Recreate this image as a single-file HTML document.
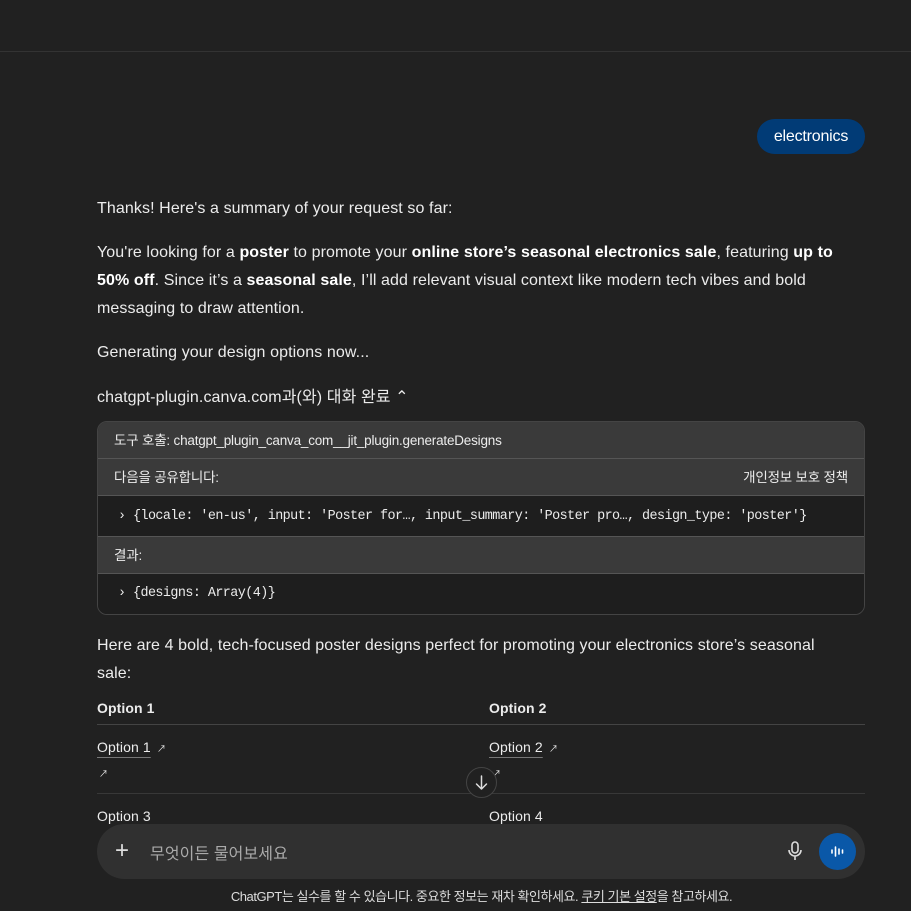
<!DOCTYPE html>
<html><head><meta charset="utf-8"><style>
*{margin:0;padding:0;box-sizing:border-box}
body{width:911px;height:911px;background:#212121;color:#ececec;font-family:"Liberation Sans","Noto Sans CJK KR",sans-serif;font-size:16px;letter-spacing:0.1px;position:relative;overflow:hidden}
.a{position:absolute}
.t{left:97px;width:800px;line-height:28px;white-space:nowrap}
b{font-weight:bold;color:#fff}
.box{left:97px;top:421px;width:768px;height:194px;border:1px solid #444;border-radius:10px;overflow:hidden;font-size:13.5px;letter-spacing:-0.2px}
.row{height:37px;line-height:37px;padding-left:16px;padding-right:16px;border-bottom:1px solid #555}
.mono{font-family:"Liberation Mono",monospace;font-size:13.4px;letter-spacing:-0.55px;background:#1e1e1e;padding-left:20px}
.u{text-decoration:underline;text-decoration-color:#777;text-underline-offset:5px}
</style></head><body>
<div class="a" style="left:0;top:0;width:911px;height:52px;border-bottom:1px solid #333"></div>
<div class="a" style="left:757px;top:119px;width:108px;height:35px;border-radius:18px;background:#013b76;color:#fff;line-height:35px;text-align:center;font-size:16px;letter-spacing:-0.2px">electronics</div>
<div class="a t" style="top:195px">Thanks! Here's a summary of your request so far:</div>
<div class="a t" style="top:239px">You're looking for a <b>poster</b> to promote your <b>online store’s seasonal electronics sale</b>, featuring <b>up to</b><br><b>50% off</b>. Since it’s a <b>seasonal sale</b>, I’ll add relevant visual context like modern tech vibes and bold<br>messaging to draw attention.</div>
<div class="a t" style="top:339px">Generating your design options now...</div>
<div class="a t" style="top:384px">chatgpt-plugin.canva.com과(와) 대화 완료 ⌃</div>
<div class="a box">
<div class="row" style="background:#3a3a3a">도구 호출: chatgpt_plugin_canva_com__jit_plugin.generateDesigns</div>
<div class="row" style="background:#3a3a3a;display:flex;justify-content:space-between"><span>다음을 공유합니다:</span><span>개인정보 보호 정책</span></div>
<div class="row mono" style="height:41px;line-height:41px">› {locale: 'en-us', input: 'Poster for…, input_summary: 'Poster pro…, design_type: 'poster'}</div>
<div class="row" style="background:#3a3a3a">결과:</div>
<div class="row mono" style="border:0;height:41px;line-height:40px">› {designs: Array(4)}</div>
</div>
<div class="a t" style="top:632px">Here are 4 bold, tech-focused poster designs perfect for promoting your electronics store’s seasonal<br>sale:</div>
<div class="a" style="left:97px;top:700px;font-size:14px;font-weight:bold">Option 1</div>
<div class="a" style="left:489px;top:700px;font-size:14px;font-weight:bold">Option 2</div>
<div class="a" style="left:97px;top:724px;width:768px;height:1px;background:#444"></div>
<div class="a u" style="left:97px;top:739px;font-size:14px">Option 1</div><span class="a" style="left:157px;top:742px;font-size:9px">↗</span>
<div class="a u" style="left:489px;top:739px;font-size:14px">Option 2</div><span class="a" style="left:549px;top:742px;font-size:9px">↗</span>
<span class="a" style="left:99px;top:767px;font-size:9px">↗</span>
<span class="a" style="left:492px;top:767px;font-size:9px">↗</span>
<div class="a" style="left:97px;top:793px;width:768px;height:1px;background:#383838"></div>
<div class="a" style="left:466px;top:767px;width:31px;height:31px;border-radius:50%;border:1px solid #444;background:#212121"></div>
<svg class="a" style="left:473px;top:774px" width="17" height="17" viewBox="0 0 17 17" fill="none" stroke="#ddd" stroke-width="1.5" stroke-linecap="round" stroke-linejoin="round"><path d="M8.5 2v13M3.5 10l5 5 5-5"/></svg>
<div class="a" style="left:97px;top:808px;font-size:14px">Option 3</div>
<div class="a" style="left:489px;top:808px;font-size:14px">Option 4</div>
<div class="a" style="left:97px;top:824px;width:768px;height:55px;border-radius:28px;background:#303030"></div>
<div class="a" style="left:115px;top:837px;font-size:24px;line-height:28px;color:#ddd">+</div>
<div class="a" style="left:150px;top:840px;font-size:16px;color:#aaa">무엇이든 물어보세요</div>
<svg class="a" style="left:786px;top:841px" width="18" height="20" viewBox="0 0 18 20" fill="none" stroke="#ddd" stroke-width="1.6"><rect x="6" y="1" width="6" height="11" rx="3"/><path d="M3 9a6 6 0 0 0 12 0M9 15v4"/></svg>
<div class="a" style="left:819px;top:833px;width:37px;height:37px;border-radius:50%;background:#0a58a8"></div>
<svg class="a" style="left:828px;top:842px" width="19" height="19" viewBox="0 0 19 19" stroke="#fff" stroke-width="1.6" stroke-linecap="round"><path d="M4 8v3M7.5 5v9M11 7v5M14.5 8v3"/></svg>
<div class="a" style="left:0;top:886px;width:963px;text-align:center;font-size:13px;letter-spacing:-0.45px;color:#ddd">ChatGPT는 실수를 할 수 있습니다. 중요한 정보는 재차 확인하세요. <span style="text-decoration:underline">쿠키 기본 설정</span>을 참고하세요.</div>
</body></html>
